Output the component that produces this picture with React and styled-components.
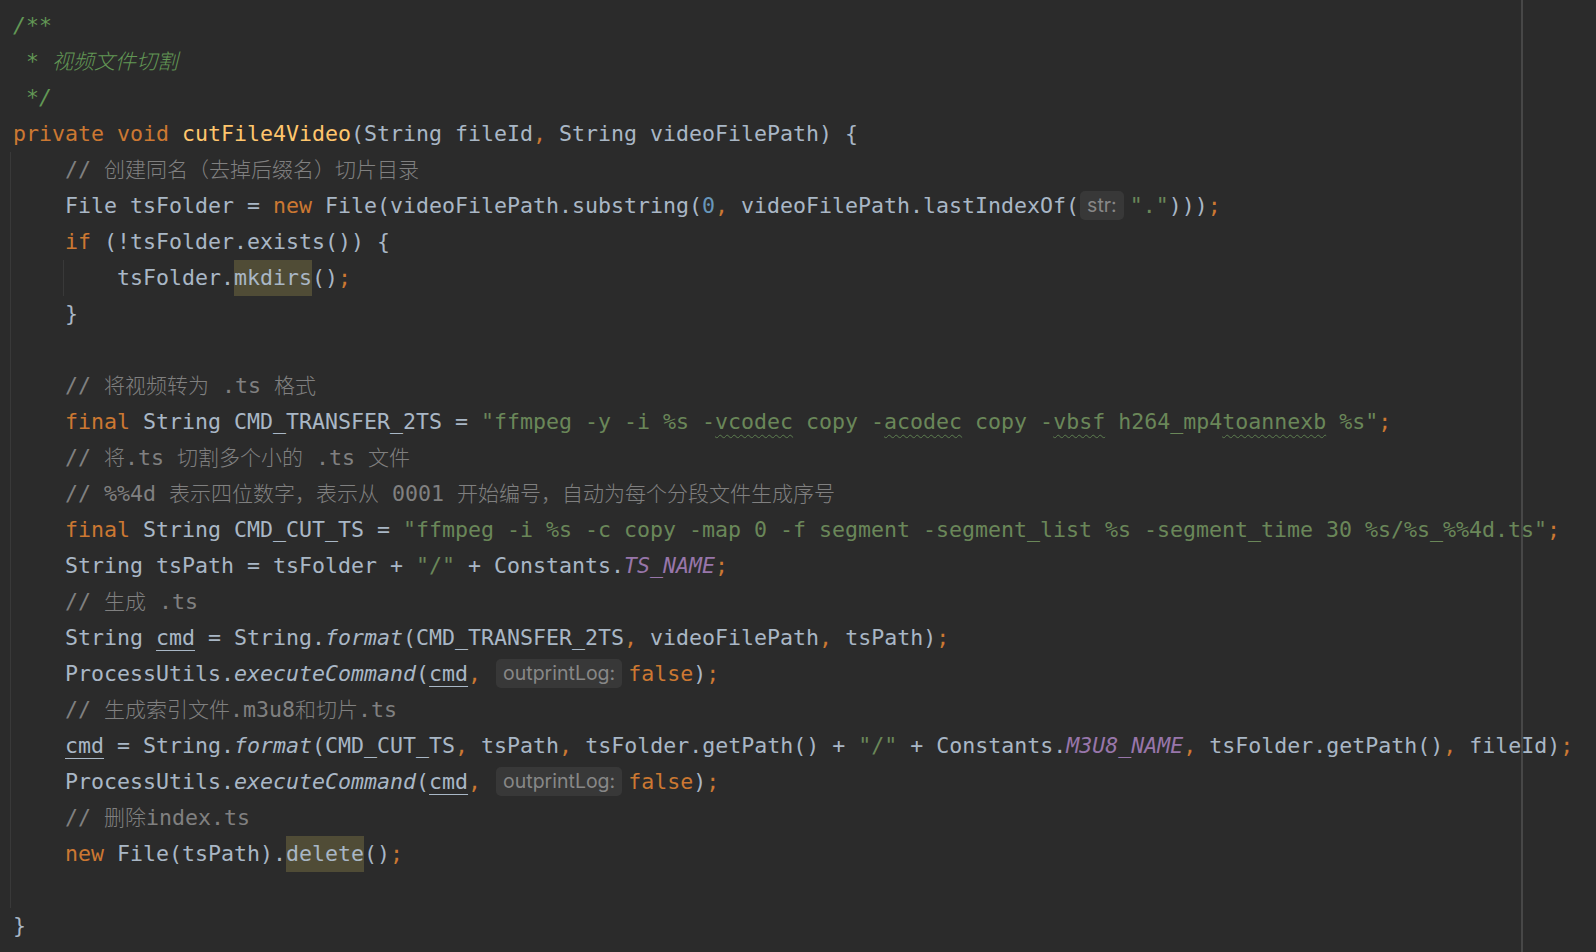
import React from "react";
import styled, { createGlobalStyle } from "styled-components";

const GlobalStyle = createGlobalStyle`
  html, body { margin: 0; padding: 0; background: #2b2b2b; }
  #root { min-height: 100vh; }
`;

const Editor = styled.div`
  position: relative;
  box-sizing: border-box;
  width: 100%;
  min-height: 952px;
  overflow: hidden;
  background: #2b2b2b;
  padding-top: 7.5px;
  font-family: "DejaVu Sans Mono", "Noto Sans CJK SC", monospace;
  font-size: 21.6px;
  color: #a9b7c6;
`;

const Line = styled.div`
  height: 36px;
  line-height: 36px;
  white-space: pre;
  padding-left: 13px;
`;

const COLORS = {
  kw: "#cc7832",
  fn: "#ffc66d",
  str: "#6a8759",
  cm: "#808080",
  doc: "#629755",
  num: "#6897bb",
  st: "#9876aa",
  it: "#a9b7c6",
};

const Tok = styled.span`
  color: ${(p) => COLORS[p.$k] || "#a9b7c6"};
  font-style: ${(p) => (p.$k === "doc" || p.$k === "st" || p.$k === "it" ? "italic" : "normal")};
`;

const Cjk = styled.span`
  font-family: "Noto Sans CJK SC", sans-serif;
  font-size: 21px;
  font-weight: 300;
  line-height: 1;
`;

const Hl = styled.span`
  display: inline-block;
  height: 36px;
  background: #504c36;
`;

const Typo = styled.span`
  text-decoration: underline wavy #5d7d4f;
  text-decoration-thickness: 1px;
  text-underline-offset: 5px;
`;

const Reassigned = styled.span`
  text-decoration: underline solid #a9b7c6;
  text-decoration-thickness: 1px;
  text-underline-offset: 5px;
`;

const Hint = styled.span`
  display: inline-block;
  box-sizing: border-box;
  height: 29px;
  line-height: 29px;
  padding: 0 7px;
  margin: 0 6px 0 ${(p) => p.$ml || 2}px;
  border-radius: 5px;
  background: #383838;
  color: #878787;
  font-family: "Inter", "Noto Sans", sans-serif;
  font-size: 19.5px;
  vertical-align: middle;
  position: relative;
  top: -1px;
`;

const Guide = styled.div`
  position: absolute;
  left: ${(p) => p.$x}px;
  top: ${(p) => p.$top}px;
  height: ${(p) => p.$h}px;
  width: 1px;
  background: #393939;
`;

const Margin = styled.div`
  position: absolute;
  left: 1521px;
  top: 0;
  bottom: 0;
  width: 2px;
  background: #474747;
`;

const CJK_RE = /([\u3000-\u9fff\uff00-\uffef]+)/;
const withCjk = (text) =>
  text.split(CJK_RE).map((part, i) =>
    i % 2 === 1 ? <Cjk key={i}>{part}</Cjk> : part
  );

const K = ({ children }) => <Tok $k="kw">{children}</Tok>;
const S = ({ children }) => <Tok $k="str">{children}</Tok>;
const C = ({ children }) => <Tok $k="cm">{withCjk(children)}</Tok>;
const D = ({ children }) => <Tok $k="doc">{withCjk(children)}</Tok>;

export default function App() {
  return (
    <>
      <GlobalStyle />
      <Editor>
        <Guide $x={10} $top={151.5} $h={756} />
        <Guide $x={63} $top={259.5} $h={36} />
        <Margin />

        <Line><D>/**</D></Line>
        <Line><D> * 视频文件切割</D></Line>
        <Line><D> */</D></Line>
        <Line>
          <K>private void </K><Tok $k="fn">cutFile4Video</Tok>(String fileId<K>, </K>String videoFilePath) {"{"}
        </Line>
        <Line>{"    "}<C>// 创建同名（去掉后缀名）切片目录</C></Line>
        <Line>
          {"    File tsFolder = "}<K>new </K>File(videoFilePath.substring(<Tok $k="num">0</Tok><K>, </K>videoFilePath.lastIndexOf(<Hint $ml={1}>str:</Hint><S>"."</S>)))<K>;</K>
        </Line>
        <Line>{"    "}<K>if </K>(!tsFolder.exists()) {"{"}</Line>
        <Line>{"        tsFolder."}<Hl>mkdirs</Hl>()<K>;</K></Line>
        <Line>{"    }"}</Line>
        <Line> </Line>
        <Line>{"    "}<C>// 将视频转为 .ts 格式</C></Line>
        <Line>
          {"    "}<K>final </K>String CMD_TRANSFER_2TS = <S>"ffmpeg -y -i %s -<Typo>vcodec</Typo> copy -<Typo>acodec</Typo> copy -<Typo>vbsf</Typo> h264_mp4<Typo>toannexb</Typo> %s"</S><K>;</K>
        </Line>
        <Line>{"    "}<C>// 将.ts 切割多个小的 .ts 文件</C></Line>
        <Line>{"    "}<C>// %%4d 表示四位数字，表示从 0001 开始编号，自动为每个分段文件生成序号</C></Line>
        <Line>
          {"    "}<K>final </K>String CMD_CUT_TS = <S>"ffmpeg -i %s -c copy -map 0 -f segment -segment_list %s -segment_time 30 %s/%s_%%4d.ts"</S><K>;</K>
        </Line>
        <Line>
          {"    String tsPath = tsFolder + "}<S>"/"</S> + Constants.<Tok $k="st">TS_NAME</Tok><K>;</K>
        </Line>
        <Line>{"    "}<C>// 生成 .ts</C></Line>
        <Line>
          {"    String "}<Reassigned>cmd</Reassigned> = String.<Tok $k="it">format</Tok>(CMD_TRANSFER_2TS<K>, </K>videoFilePath<K>, </K>tsPath)<K>;</K>
        </Line>
        <Line>
          {"    ProcessUtils."}<Tok $k="it">executeCommand</Tok>(<Reassigned>cmd</Reassigned><K>, </K><Hint>outprintLog:</Hint><K>false</K>)<K>;</K>
        </Line>
        <Line>{"    "}<C>// 生成索引文件.m3u8和切片.ts</C></Line>
        <Line>
          {"    "}<Reassigned>cmd</Reassigned> = String.<Tok $k="it">format</Tok>(CMD_CUT_TS<K>, </K>tsPath<K>, </K>tsFolder.getPath() + <S>"/"</S> + Constants.<Tok $k="st">M3U8_NAME</Tok><K>, </K>tsFolder.getPath()<K>, </K>fileId)<K>;</K>
        </Line>
        <Line>
          {"    ProcessUtils."}<Tok $k="it">executeCommand</Tok>(<Reassigned>cmd</Reassigned><K>, </K><Hint>outprintLog:</Hint><K>false</K>)<K>;</K>
        </Line>
        <Line>{"    "}<C>// 删除index.ts</C></Line>
        <Line>{"    "}<K>new </K>File(tsPath).<Hl>delete</Hl>()<K>;</K></Line>
        <Line> </Line>
        <Line>{"}"}</Line>
      </Editor>
    </>
  );
}
